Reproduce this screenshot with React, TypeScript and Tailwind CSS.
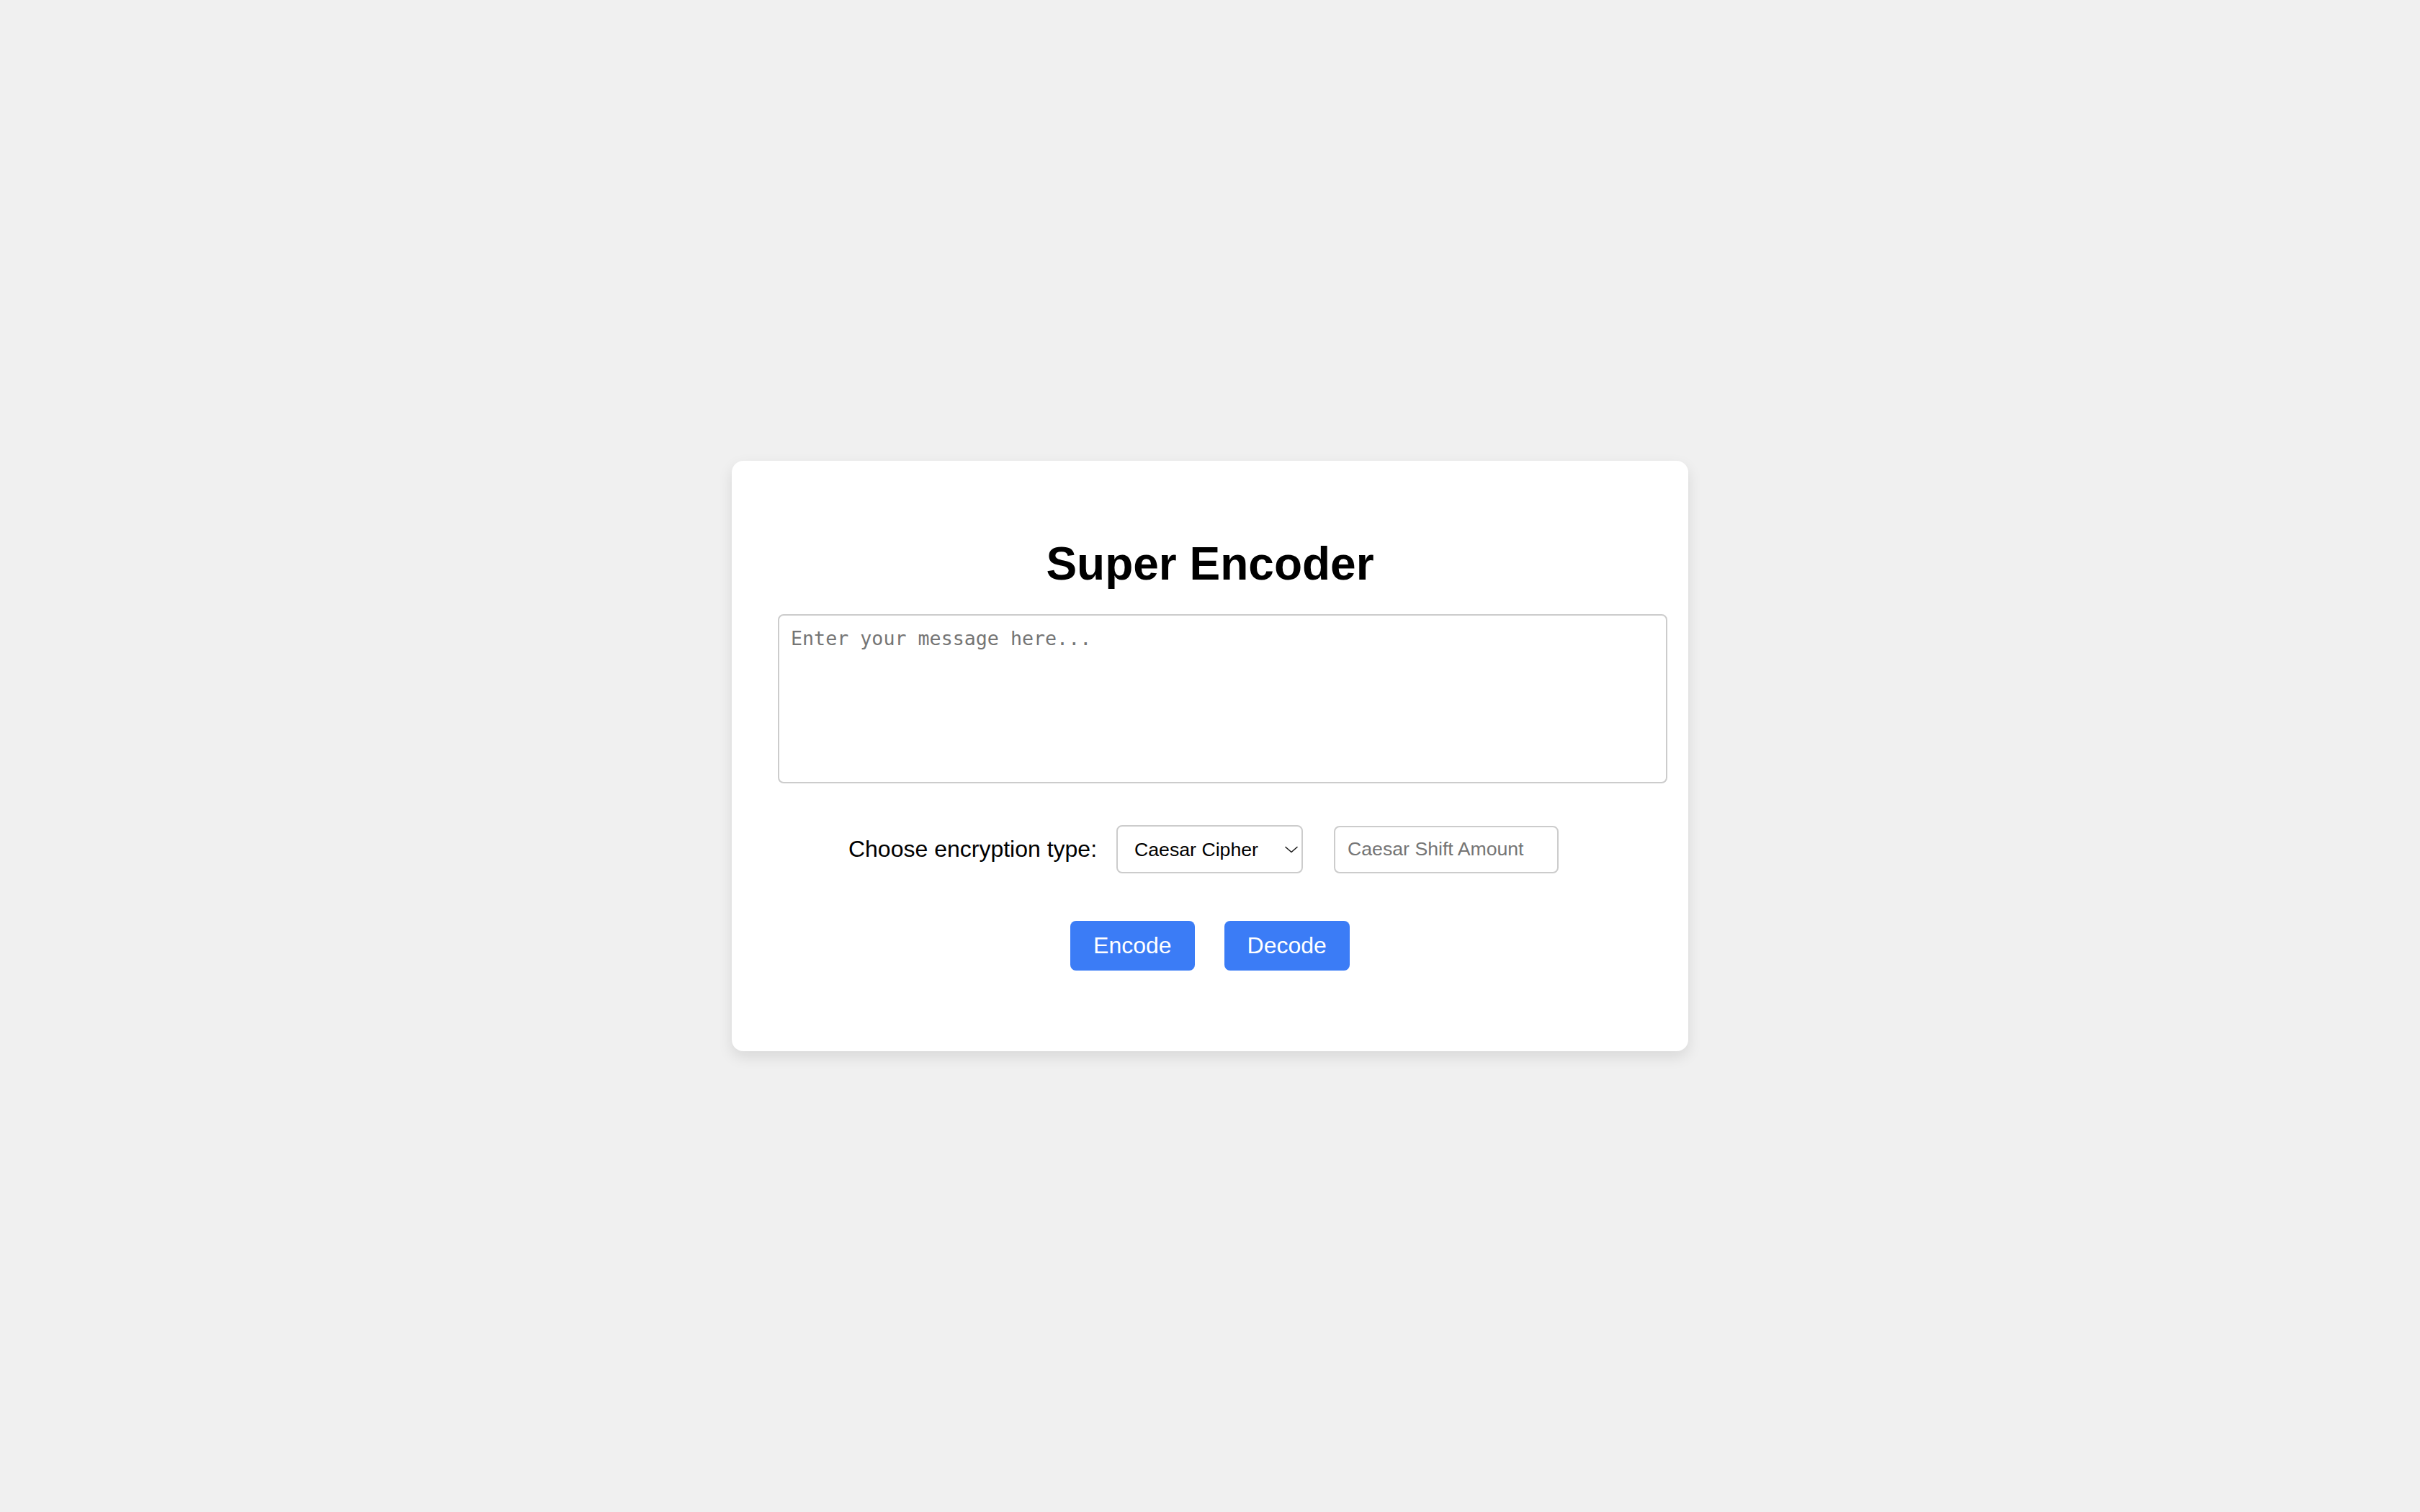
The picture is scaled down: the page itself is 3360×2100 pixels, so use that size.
import { useState } from 'react';

// Simple encoder card, centred on a light grey page
export default function App() {
  const [message, setMessage] = useState('');
  const [cipher, setCipher] = useState('caesar');
  const [shift, setShift] = useState('');

  return (
    <div className="min-h-screen w-full bg-[#f0f0f0] flex items-center justify-center font-['Liberation_Sans',Arial,sans-serif]">
      <div className="w-[1328px] bg-white rounded-[16px] shadow-[0_8px_20px_rgba(0,0,0,0.1)] pt-[106px] pb-[112px] px-[64px]">
        {/* Title */}
        <h1 className="text-center text-[64px] leading-[74px] font-bold text-black">Super Encoder</h1>

        {/* Message box */}
        <textarea
          value={message}
          onChange={(e) => setMessage(e.target.value)}
          placeholder="Enter your message here..."
          className="block mt-[33px] w-[1235px] h-[235px] border-2 border-[#cccccc] rounded-[8px] px-[16px] py-[16px] resize-none outline-none font-['DejaVu_Sans_Mono',monospace] text-[26.67px] leading-[31px] text-black placeholder:text-[#757575]"
        />

        {/* Cipher options */}
        <div className="mt-[58px] flex items-center justify-center pr-[18px]">
          <label className="text-[32px] leading-[37px] text-black mr-[27px]">Choose encryption type:</label>
          <div className="relative mr-[43px]">
            <select
              value={cipher}
              onChange={(e) => setCipher(e.target.value)}
              className="appearance-none w-[259px] h-[67px] border-2 border-[#cccccc] rounded-[8px] bg-white pl-[23px] pr-[40px] text-[26.67px] text-black outline-none font-['Liberation_Sans',Arial,sans-serif]"
            >
              <option value="caesar">Caesar Cipher</option>
              <option value="symbol">Symbol Cipher</option>
              <option value="reverse">Reverse Cipher</option>
            </select>
            <svg className="absolute right-[7px] top-[29px] pointer-events-none" width="18" height="10" viewBox="0 0 18 10" fill="none">
              <path d="M1 1.5 L9 8.5 L17 1.5" stroke="#1a1a1a" strokeWidth="1.6" strokeLinecap="round" strokeLinejoin="round" />
            </svg>
          </div>
          <input
            type="number"
            value={shift}
            onChange={(e) => setShift(e.target.value)}
            placeholder="Caesar Shift Amount"
            className="w-[312px] h-[66px] border-2 border-[#cccccc] rounded-[8px] px-[17px] text-[26.67px] text-black outline-none placeholder:text-[#757575] [appearance:textfield] font-['Liberation_Sans',Arial,sans-serif]"
          />
        </div>

        {/* Actions */}
        <div className="mt-[66px] flex justify-center gap-[41px]">
          <button className="bg-[#3b7cf6] text-white text-[32px] leading-[37px] px-[32px] py-[16px] rounded-[8px]">Encode</button>
          <button className="bg-[#3b7cf6] text-white text-[32px] leading-[37px] px-[32px] py-[16px] rounded-[8px]">Decode</button>
        </div>
      </div>
    </div>
  );
}
